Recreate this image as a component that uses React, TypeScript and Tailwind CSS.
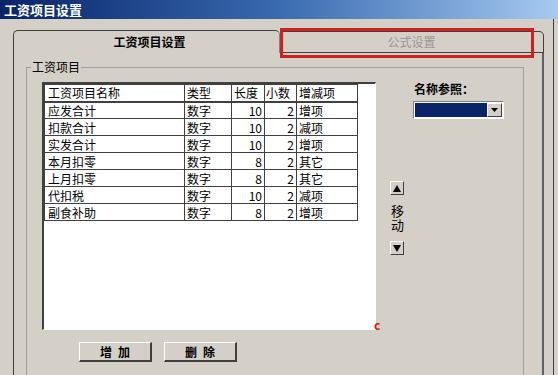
import React from 'react';

interface SalaryItem {
  name: string;
  type: string;
  length: number;
  decimals: number;
  kind: string;
}

const items: SalaryItem[] = [
  { name: '应发合计', type: '数字', length: 10, decimals: 2, kind: '增项' },
  { name: '扣款合计', type: '数字', length: 10, decimals: 2, kind: '减项' },
  { name: '实发合计', type: '数字', length: 10, decimals: 2, kind: '增项' },
  { name: '本月扣零', type: '数字', length: 8, decimals: 2, kind: '其它' },
  { name: '上月扣零', type: '数字', length: 8, decimals: 2, kind: '其它' },
  { name: '代扣税', type: '数字', length: 10, decimals: 2, kind: '减项' },
  { name: '副食补助', type: '数字', length: 8, decimals: 2, kind: '增项' },
];

const font = { fontFamily: '"Noto Sans CJK SC", "DejaVu Sans", sans-serif' };

function ArrowButton({ down }: { down?: boolean }) {
  return (
    <div className="w-[14px] h-[14px] bg-[#d4d0c8] border-t border-l border-white border-r border-b border-r-[#404040] border-b-[#404040] flex items-center justify-center">
      <svg width="8" height="7" viewBox="0 0 8 7">
        {down ? <polygon points="0,0 8,0 4,7" fill="#000" /> : <polygon points="4,0 8,7 0,7" fill="#000" />}
      </svg>
    </div>
  );
}

function PushButton({ label }: { label: string }) {
  return (
    <button className="w-[73px] h-[20px] bg-[#d4d0c8] border-t border-l border-white border-r-2 border-b-2 border-r-[#404040] border-b-[#404040] text-[12px] font-bold tracking-[6px] text-black flex items-center justify-center pl-[6px]">
      {label}
    </button>
  );
}

export default function App() {
  return (
    <div className="w-[558px] h-[375px] bg-[#d4d0c8] overflow-hidden flex flex-col text-black relative" style={font}>
      {/* title bar */}
      <div className="h-[19px] shrink-0 bg-gradient-to-r from-[#0a246a] via-[#3a6ab0] to-[#a6caf0] flex items-center px-[4px]">
        <span className="text-white text-[13px] font-bold leading-none">工资项目设置</span>
      </div>

      <div className="flex-1 flex">
        {/* tab control */}
        <div className="ml-[13px] mt-[11px] w-[531px] flex flex-col">
          <div className="h-[23px] flex shrink-0">
            <div className="w-[267px] rounded-t-[5px] border-t border-l border-[#404040] border-r border-r-[#808080] bg-[#d4d0c8] flex items-center justify-center pl-[6px]">
              <span className="text-[12px] font-bold">工资项目设置</span>
            </div>
            <div className="w-[264px] mt-[1px] rounded-tr-[5px] border-t border-r border-[#404040] border-b border-b-[#404040] bg-[#d4d0c8] flex items-center justify-center relative">
              <span className="text-[12px] text-[#9a9690]">公式设置</span>
              <div className="absolute left-[0px] top-[-4px] w-[254px] h-[30px] border-[3px] border-[#d02020]" />
            </div>
          </div>

          {/* panel */}
          <div className="flex-1 border-l border-[#404040] border-r-2 border-r-[#606060] pl-[12px] pt-[14px]">
            <div className="w-[498px] h-full border-t border-l border-[#a0a0a0] border-r border-r-[#a0a0a0] relative pl-[15px] pt-[14px]">
              <div className="absolute left-[4px] top-[-8px] bg-[#d4d0c8] px-[1px] text-[12px] leading-[14px]">工资项目</div>
              <div className="flex">
                <div className="flex flex-col">
                  {/* list */}
                  <div className="w-[334px] h-[248px] bg-white border-t-2 border-l-2 border-[#404040] border-r border-b border-r-white border-b-white">
                    <table className="border-collapse text-[12px] leading-[15px]">
                      <thead>
                        <tr className="h-[17px]">
                          <th className="w-[140px] border border-[#404040] border-b-2 font-normal text-left pl-[3px]">工资项目名称</th>
                          <th className="w-[47px] border border-[#404040] border-b-2 font-normal text-left pl-[2px]">类型</th>
                          <th className="w-[33px] border border-[#404040] border-b-2 font-normal text-left pl-[2px]">长度</th>
                          <th className="w-[32px] border border-[#404040] border-b-2 font-normal text-left pl-[1px]">小数</th>
                          <th className="w-[61px] border border-[#404040] border-b-2 font-normal text-left pl-[2px]">增减项</th>
                        </tr>
                      </thead>
                      <tbody>
                        {items.map((it) => (
                          <tr key={it.name} className="h-[17px]">
                            <td className="border border-[#404040] pl-[3px]">{it.name}</td>
                            <td className="border border-[#404040] pl-[2px]">{it.type}</td>
                            <td className="border border-[#404040] text-right pr-[2px]">{it.length}</td>
                            <td className="border border-[#404040] text-right pr-[2px]">{it.decimals}</td>
                            <td className="border border-[#404040] pl-[2px]">{it.kind}</td>
                          </tr>
                        ))}
                      </tbody>
                    </table>
                  </div>
                  <div className="flex gap-[12px] pl-[37px] mt-[12px]">
                    <PushButton label="增加" />
                    <PushButton label="删除" />
                  </div>
                </div>

                {/* move buttons */}
                <div className="ml-[13px] pt-[99px] flex flex-col items-center w-[16px]">
                  <ArrowButton />
                  <div className="mt-[10px] mb-[8px] h-[28px] text-[13px] leading-[16px] tracking-[1px] [writing-mode:vertical-rl]">
                    移动
                  </div>
                  <ArrowButton down />
                </div>

                {/* name reference */}
                <div className="ml-[8px] flex flex-col">
                  <div className="text-[12px] font-bold leading-[14px] pl-[1px]">名称参照：</div>
                  <div className="mt-[5px] w-[91px] h-[18px] bg-white border-t border-l border-[#808080] border-r border-b border-r-white border-b-white flex p-[1px]">
                    <div className="flex-1 bg-[#0a246a]" />
                    <div className="w-[15px] bg-[#d4d0c8] border-t border-l border-white border-r border-b border-r-[#404040] border-b-[#404040] flex items-center justify-center">
                      <svg width="7" height="4" viewBox="0 0 7 4"><polygon points="0,0 7,0 3.5,4" fill="#000" /></svg>
                    </div>
                  </div>
                </div>
              </div>
              <div className="absolute left-[347px] top-[251px] text-[12px] font-bold text-[#d02020] leading-none">c</div>
            </div>
          </div>
        </div>
        <div className="ml-[9px] w-[1px] bg-[#404040]" />
      </div>
    </div>
  );
}
